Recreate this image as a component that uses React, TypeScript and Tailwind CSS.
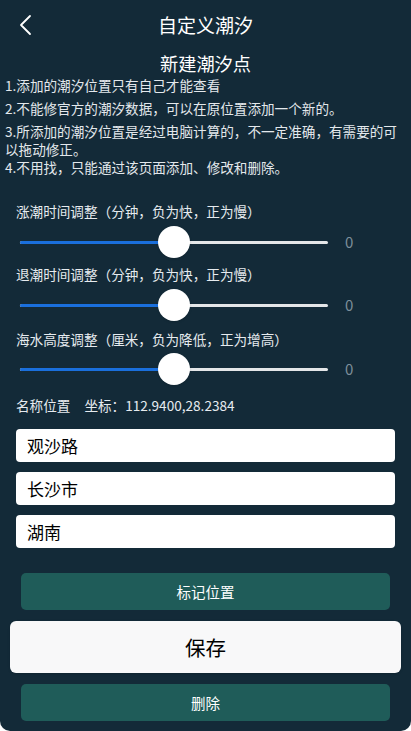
import { useState } from "react";

const rules = [
  "1.添加的潮汐位置只有自己才能查看",
  "2.不能修官方的潮汐数据，可以在原位置添加一个新的。",
  "3.所添加的潮汐位置是经过电脑计算的，不一定准确，有需要的可以拖动修正。",
  "4.不用找，只能通过该页面添加、修改和删除。",
];

const sliders = [
  "涨潮时间调整（分钟，负为快，正为慢）",
  "退潮时间调整（分钟，负为快，正为慢）",
  "海水高度调整（厘米，负为降低，正为增高）",
];

function Slider() {
  return (
    <div className="flex h-[32px] items-center pl-[20px]">
      <div className="relative h-[32px] w-[308px]">
        <div className="absolute left-0 right-0 top-[15px] h-[3px] rounded-full bg-[#e4e6e8]" />
        <div className="absolute left-0 top-[15px] h-[3px] w-[154px] rounded-full bg-[#1a6fdc]" />
        <div className="absolute left-[138px] top-0 h-[32px] w-[32px] rounded-full bg-white shadow" />
      </div>
      <span className="ml-[17px] text-[15px] leading-[20px] text-[#7d8f9b]">0</span>
    </div>
  );
}

export default function App() {
  const [fields, setFields] = useState(["观沙路", "长沙市", "湖南"]);

  return (
    <div
      className="h-[731px] w-full overflow-hidden rounded-b-[10px] bg-[#132a38] text-white"
      style={{ fontFamily: '"Noto Sans CJK SC", "Noto Sans", sans-serif' }}
    >
      <div className="grid h-[50px] grid-cols-[56px_1fr_56px] items-center">
        <button className="flex h-full items-center pl-[18px]">
          <svg width="14" height="22" viewBox="0 0 14 22" fill="none">
            <path d="M12 2 L3 11 L12 20" stroke="white" strokeWidth="1.8" strokeLinecap="round" strokeLinejoin="round" />
          </svg>
        </button>
        <h1 className="text-center text-[19px] leading-[24px]">自定义潮汐</h1>
        <div />
      </div>

      <h2 className="mt-[1px] text-center text-[18.2px] leading-[24px]">新建潮汐点</h2>

      <div className="px-[5px] text-[13.6px] text-[#e3e8ec]">
        <p className="leading-[20px]">{rules[0]}</p>
        <p className="mt-[3px] leading-[20px]">{rules[1]}</p>
        <p className="mt-[4px] leading-[18px]">{rules[2]}</p>
        <p className="leading-[18px]">{rules[3]}</p>
      </div>

      <div className="mt-[25px]">
        <div className="px-4 text-[13.6px] leading-[20px] text-[#e6ebef]">{sliders[0]}</div>
        <div className="mt-[5px]">
          <Slider />
        </div>
        <div className="mt-[6px] px-4 text-[13.6px] leading-[20px] text-[#e6ebef]">{sliders[1]}</div>
        <div className="mt-[5px]">
          <Slider />
        </div>
        <div className="mt-[8px] px-4 text-[13.6px] leading-[20px] text-[#e6ebef]">{sliders[2]}</div>
        <div className="mt-[4px]">
          <Slider />
        </div>
      </div>

      <div className="mt-[10px] px-4 text-[13.6px] leading-[20px] text-[#e6ebef]">
        名称位置<span className="ml-[14px]">坐标：112.9400,28.2384</span>
      </div>

      <div className="mt-[14px] flex flex-col gap-[10px] px-4">
        {fields.map((f, i) => (
          <input
            key={i}
            value={f}
            onChange={(e) => {
              const next = [...fields];
              next[i] = e.target.value;
              setFields(next);
            }}
            className="h-[33px] w-full rounded-[4px] bg-white px-[11px] text-[17px] text-black outline-none"
          />
        ))}
      </div>

      <div className="mt-[25px] flex flex-col gap-[11px]">
        <button className="mx-[21px] h-[37px] rounded-[5px] bg-[#1f5c59] text-[14.5px] text-white">标记位置</button>
        <button className="mx-[10px] h-[52px] rounded-[6px] bg-[#f8f8f9] text-[20.5px] text-black shadow-sm">保存</button>
        <button className="mx-[21px] h-[37px] rounded-[5px] bg-[#1f5c59] text-[14.5px] text-white">删除</button>
      </div>
    </div>
  );
}
